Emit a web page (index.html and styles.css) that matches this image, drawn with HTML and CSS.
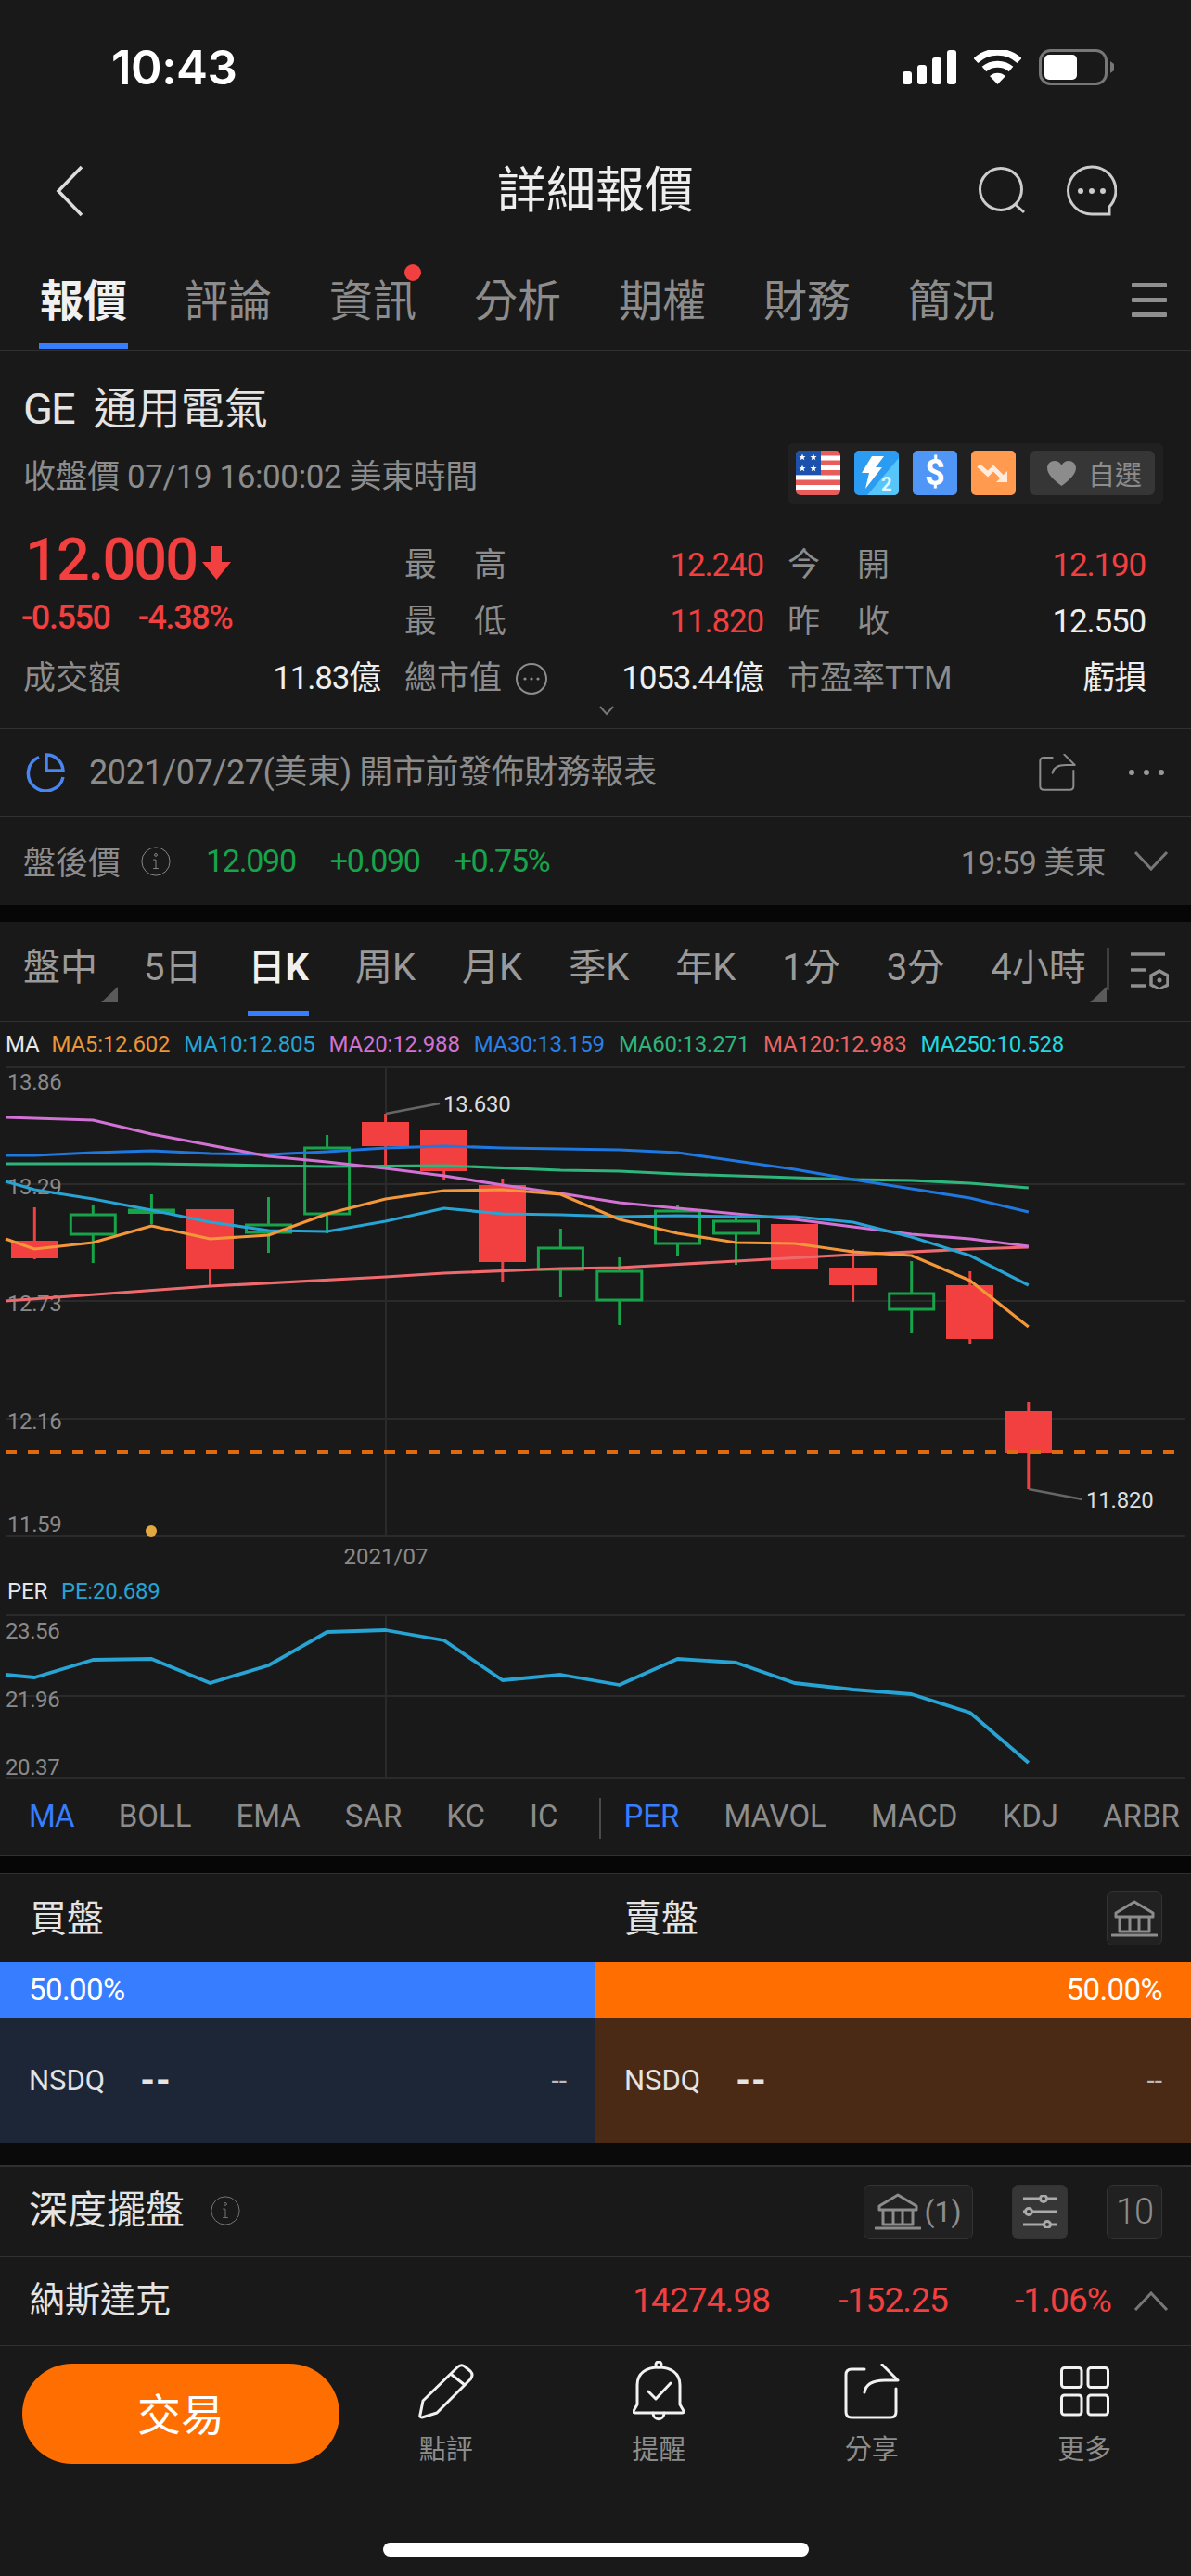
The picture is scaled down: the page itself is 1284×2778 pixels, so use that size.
FILE: index.html
```html
<!DOCTYPE html>
<html lang="zh-Hant">
<head>
  <meta charset="UTF-8" />
  <meta name="viewport" content="width=device-width, initial-scale=1.0"/>
  <title>詳細報價</title>
  <link rel="stylesheet" href="styles.css">
</head>
<body>
  <svg class="sprites">
    <symbol id="share" viewBox="0 0 60 60">
      <path d="M22 6H8Q2 6 2 12V52Q2 58 8 58H50Q56 58 56 52V27M41 1L58 18H44Q24 18 22 31" />
    </symbol>
    <symbol id="bank" viewBox="0 0 50 40">
      <path d="M5 14L25 2L45 14V18H5Z M1 38H49 M9 18V34H41V18 M20 18V34 M30 18V34" />
    </symbol>
    <symbol id="info" viewBox="0 0 36 36">
      <circle cx="18" cy="18" r="16" />
      <path d="M18 16V26 M15 26H21 M15 16H18" />
      <circle class="dot" cx="18" cy="10.5" r="1.5" />
    </symbol>
  </svg>

  <div class="status">
    <span class="clock">10:43</span>
    <div class="status-icons">
      <svg class="ico-signal" viewBox="0 0 58 37">
        <rect x="0" y="23" width="10" height="14" rx="3" />
        <rect x="16" y="16" width="10" height="21" rx="3" />
        <rect x="32" y="8" width="10" height="29" rx="3" />
        <rect x="48" y="0" width="10" height="37" rx="3" />
      </svg>
      <svg class="ico-wifi" viewBox="0 0 51 37">
        <path d="M2 11.5C15 -1 36 -1 49 11.5" />
        <path d="M11 20.5C19 13.5 32 13.5 40 20.5" />
        <path class="solid" d="M25.5 37L17 28C22 23.5 29 23.5 34 28Z" />
      </svg>
      <svg class="ico-batt" viewBox="0 0 82 39">
        <rect class="shell" x="1.5" y="1.5" width="71" height="36" rx="11" />
        <rect class="level" x="6" y="6" width="35" height="27" rx="5" />
        <path class="nub" d="M77 13L81 16V23L77 26Z" />
      </svg>
    </div>
  </div>

  <header class="nav">
    <svg class="ico-back" viewBox="0 0 30 56"><path d="M28 2L3 28L28 54" /></svg>
    <h1 class="nav-title">詳細報價</h1>
    <div class="nav-icons">
      <svg class="ico-search" viewBox="0 0 52 52">
        <circle cx="24" cy="24" r="22.5" />
        <path d="M39 40L49 49" />
      </svg>
      <svg class="ico-chat" viewBox="0 0 54 56">
        <path d="M27 2A25.5 25.5 0 1 0 27 53H46V45A25.5 25.5 0 0 0 27 2Z" />
        <circle class="dot" cx="15" cy="28" r="3" />
        <circle class="dot" cx="27" cy="28" r="3" />
        <circle class="dot" cx="39" cy="28" r="3" />
      </svg>
    </div>
  </header>

  <nav class="tabs">
    <a class="tab active">報價</a>
    <a class="tab">評論</a>
    <a class="tab has-dot">資訊</a>
    <a class="tab">分析</a>
    <a class="tab">期權</a>
    <a class="tab">財務</a>
    <a class="tab">簡況</a>
    <div class="tabs-menu"><span></span><span></span><span></span></div>
  </nav>

  <section class="quote">
    <div class="stock-name"><span class="ticker">GE</span><span>通用電氣</span></div>
    <div class="close-row">
      <span class="close-time">收盤價 07/19 16:00:02 美東時間</span>
      <div class="badges">
        <svg class="badge" viewBox="0 0 48 48">
          <rect width="48" height="48" fill="#e85c5c" />
          <rect y="5.5" width="48" height="5" fill="#fff" />
          <rect y="16" width="48" height="5" fill="#fff" />
          <rect y="26.5" width="48" height="5" fill="#fff" />
          <rect y="37" width="48" height="5" fill="#fff" />
          <rect width="27" height="26" fill="#1c52ad" />
          <path fill="#fff" d="M7 3.5L8 6H10.5L8.5 7.7L9.3 10.3L7 8.8L4.7 10.3L5.5 7.7L3.5 6H6Z" />
          <path fill="#fff" d="M19 3.5L20 6H22.5L20.5 7.7L21.3 10.3L19 8.8L16.7 10.3L17.5 7.7L15.5 6H18Z" />
          <path fill="#fff" d="M7 15.5L8 18H10.5L8.5 19.7L9.3 22.3L7 20.8L4.7 22.3L5.5 19.7L3.5 18H6Z" />
          <path fill="#fff" d="M19 15.5L20 18H22.5L20.5 19.7L21.3 22.3L19 20.8L16.7 22.3L17.5 19.7L15.5 18H18Z" />
        </svg>
        <svg class="badge" viewBox="0 0 48 48">
          <rect width="48" height="48" fill="#2c9cf2" />
          <path fill="#56c6fa" d="M48 8V48H14Z" />
          <path fill="#fff" d="M19 6H32L23 18H30L12 41L16 24H8Z" />
          <text class="badge-two" x="29" y="43">2</text>
        </svg>
        <svg class="badge" viewBox="0 0 48 48">
          <rect width="48" height="48" fill="#4f96f7" />
          <text class="badge-dollar" x="24" y="37">$</text>
        </svg>
        <svg class="badge" viewBox="0 0 48 48">
          <rect width="48" height="48" fill="#ff9a4e" />
          <path class="badge-trend" d="M8 16L18 25L24 19L34 29" />
          <path fill="#ffeadb" d="M39 22V34H27Z" />
        </svg>
        <div class="fav">
          <svg class="ico-heart" viewBox="0 0 34 30"><path d="M17 29C8 22 1 16 1 9C1 4 5 1 9 1C12.5 1 15.5 3 17 6C18.5 3 21.5 1 25 1C29 1 33 4 33 9C33 16 26 22 17 29Z" /></svg>
          <span>自選</span>
        </div>
      </div>
    </div>

    <div class="stats">
      <div class="price-box">
        <div class="price">12.000<svg class="ico-down" viewBox="0 0 31 36"><path d="M10 0H21V17H31L15.5 36L0 17H10Z" /></svg></div>
        <div class="change"><span>-0.550</span><span>-4.38%</span></div>
      </div>
      <div class="stat"><span class="lbl spread"><i>最</i><i>高</i></span><span class="val dn">12.240</span></div>
      <div class="stat"><span class="lbl spread"><i>今</i><i>開</i></span><span class="val dn">12.190</span></div>
      <div class="stat"><span class="lbl spread"><i>最</i><i>低</i></span><span class="val dn">11.820</span></div>
      <div class="stat"><span class="lbl spread"><i>昨</i><i>收</i></span><span class="val">12.550</span></div>
      <div class="stat"><span class="lbl">成交額</span><span class="val">11.83億</span></div>
      <div class="stat">
        <span class="lbl with-icon">總市值
          <svg class="ico-more" viewBox="0 0 36 36">
            <circle cx="18" cy="18" r="16" />
            <circle class="dot" cx="11" cy="18" r="1.6" />
            <circle class="dot" cx="18" cy="18" r="1.6" />
            <circle class="dot" cx="25" cy="18" r="1.6" />
          </svg>
        </span>
        <span class="val">1053.44億</span>
      </div>
      <div class="stat"><span class="lbl">市盈率TTM</span><span class="val">虧損</span></div>
    </div>
    <svg class="ico-expand" viewBox="0 0 18 12"><path d="M2 2L9 10L16 2" /></svg>
  </section>

  <section class="info-row">
    <svg class="ico-pie" viewBox="0 0 42 42">
      <path d="M14 4.5A19 19 0 1 0 40 26" />
      <path d="M22 2V19H40A18 18 0 0 0 22 2Z" />
    </svg>
    <span class="info-text">2021/07/27(美東) 開市前發佈財務報表</span>
    <svg class="ico-share-sm"><use href="#share" /></svg>
    <div class="dots"><span></span><span></span><span></span></div>
  </section>

  <section class="info-row after">
    <span class="after-lbl">盤後價</span>
    <svg class="ico-info after-i"><use href="#info" /></svg>
    <span class="up after-num">12.090</span>
    <span class="up after-num">+0.090</span>
    <span class="up after-num">+0.75%</span>
    <span class="after-time">19:59 美東</span>
    <svg class="ico-chevron" viewBox="0 0 38 22"><path d="M2 2L19 20L36 2" /></svg>
  </section>

  <div class="band"></div>

  <section class="chart">
    <div class="period-bar">
      <a class="period corner">盤中</a>
      <a class="period">5日</a>
      <a class="period active">日<b>K</b></a>
      <a class="period">周K</a>
      <a class="period">月K</a>
      <a class="period">季K</a>
      <a class="period">年K</a>
      <a class="period">1分</a>
      <a class="period">3分</a>
      <a class="period corner">4小時</a>
      <span class="period-sep"></span>
      <svg class="ico-settings" viewBox="0 0 42 40">
        <path d="M1 2H38 M1 19H18 M1 36H18" />
        <path d="M32 20L41 25V35L32 40L23 35V25Z" />
        <circle cx="32" cy="30" r="2.5" />
      </svg>
    </div>

    <div class="legend">
      <span class="lg-head">MA</span>
      <span class="c-ma5">MA5:12.602</span>
      <span class="c-ma10">MA10:12.805</span>
      <span class="c-ma20">MA20:12.988</span>
      <span class="c-ma30">MA30:13.159</span>
      <span class="c-ma60">MA60:13.271</span>
      <span class="c-ma120">MA120:12.983</span>
      <span class="c-ma250">MA250:10.528</span>
    </div>

    <!-- page coordinates kept in the viewBox so the numbers read off the screen -->
    <svg class="kline" viewBox="0 1150 1284 548">
      <path class="grid" d="M6 1151H1277 M6 1277H1277 M6 1403H1277 M6 1530H1277 M6 1656H1277 M416 1151V1656" />
      <text class="axis" x="8" y="1175">13.86</text>
      <text class="axis" x="8" y="1288">13.29</text>
      <text class="axis" x="8" y="1414">12.73</text>
      <text class="axis" x="8" y="1541">12.16</text>
      <text class="axis" x="8" y="1652">11.59</text>
      <text class="axis mid" x="416" y="1687">2021/07</text>

      <g class="cd-up">
        <path d="M100.3 1299V1310M100.3 1331V1362" /><rect x="76.3" y="1310" width="48" height="21" />
        <path d="M163.4 1288V1305M163.4 1308V1320" /><rect x="139.4" y="1305" width="48" height="2.5" />
        <path d="M289.5 1291V1321M289.5 1329V1351" /><rect x="265.5" y="1321" width="48" height="8" />
        <path d="M352.6 1224V1238M352.6 1309V1330" /><rect x="328.6" y="1238" width="48" height="71" />
        <path d="M604.4 1325V1346M604.4 1369V1399" /><rect x="580.4" y="1346" width="48" height="23" />
        <path d="M667.8 1356V1371M667.8 1402V1429" /><rect x="643.8" y="1371" width="48" height="31" />
        <path d="M730.5 1299V1306M730.5 1341V1355" /><rect x="706.5" y="1306" width="48" height="35" />
        <path d="M793.5 1313V1317M793.5 1330V1364" /><rect x="769.5" y="1317" width="48" height="13" />
        <path d="M982.7 1360V1395M982.7 1412V1438" /><rect x="958.7" y="1395" width="48" height="17" />
      </g>
      <g class="cd-dn">
        <path d="M37.3 1302V1358" /><rect x="12" y="1338" width="51" height="19" />
        <path d="M226.5 1304V1387" /><rect x="201" y="1304" width="51" height="64" />
        <path d="M415.6 1201V1257" /><rect x="390" y="1210" width="51" height="26" />
        <path d="M478.7 1219V1272" /><rect x="453" y="1219" width="51" height="44" />
        <path d="M541.8 1271V1382" /><rect x="516" y="1278" width="51" height="83" />
        <path d="M856.6 1320V1369" /><rect x="831" y="1320" width="51" height="48" />
        <path d="M919.6 1347V1404" /><rect x="894" y="1367" width="51" height="19" />
        <path d="M1045.8 1371V1449" /><rect x="1020" y="1386" width="51" height="58" />
        <path d="M1108.8 1512V1606" /><rect x="1083" y="1522" width="51" height="45" />
      </g>

      <polyline class="ln ln-ma120" points="6,1403 226.5,1387 415.6,1377 478.7,1373 604.4,1368 667.8,1367 793.5,1360 919.6,1353 1045.8,1347 1108.8,1345" />
      <polyline class="ln ln-ma60" points="6,1255 163.4,1255 289.5,1257 352.6,1258 478.7,1257 604.4,1262 667.8,1263 730.5,1266 793.5,1268 856.6,1270 919.6,1272 982.7,1273 1045.8,1276 1108.8,1281" />
      <polyline class="ln ln-ma30" points="6,1246 37.3,1246 100.3,1243 163.4,1241 226.5,1244 289.5,1245 352.6,1242 415.6,1238 478.7,1236 541.8,1238 604.4,1239 667.8,1240 730.5,1243 793.5,1252 856.6,1261 919.6,1272 982.7,1282 1045.8,1292 1108.8,1307" />
      <polyline class="ln ln-ma20" points="6,1205 37.3,1206 100.3,1208 163.4,1223 226.5,1235 289.5,1247 352.6,1253 415.6,1260 478.7,1268 541.8,1278 604.4,1287 667.8,1297 730.5,1303 793.5,1309 856.6,1315 919.6,1323 982.7,1331 1045.8,1336 1108.8,1344" />
      <polyline class="ln ln-ma10" points="6,1274 37.3,1283 100.3,1293 163.4,1305 226.5,1318 289.5,1327 352.6,1328 415.6,1317 478.7,1303 541.8,1309 604.4,1310 667.8,1312 730.5,1311 793.5,1312 856.6,1312 919.6,1318 982.7,1334 1045.8,1354 1108.8,1386" />
      <polyline class="ln ln-ma5" points="6,1336 37.3,1347 100.3,1340 163.4,1322 226.5,1336 289.5,1332 352.6,1309 415.6,1293 478.7,1284 541.8,1283 604.4,1288 667.8,1315 730.5,1330 793.5,1340 856.6,1341 919.6,1350 982.7,1354 1045.8,1381 1108.8,1431" />

      <path class="dash" d="M6 1566H1266" />
      <path class="leader" d="M416 1201L474 1190 M1109 1606L1167 1617" />
      <text class="tag" x="478" y="1199">13.630</text>
      <text class="tag" x="1171" y="1626">11.820</text>
      <circle class="marker" cx="163" cy="1651" r="6" />
    </svg>

    <div class="legend per-legend">
      <span class="lg-head">PER</span>
      <span class="c-ma10">PE:20.689</span>
    </div>

    <svg class="perline" viewBox="0 1741 1284 184">
      <path class="grid" d="M6 1742H1277 M6 1829H1277 M6 1917H1277 M416 1742V1917" />
      <text class="axis" x="6" y="1767">23.56</text>
      <text class="axis" x="6" y="1841">21.96</text>
      <text class="axis" x="6" y="1914">20.37</text>
      <polyline class="ln ln-ma10 ln-pe" points="6,1806 37.3,1809 100.3,1790 163.4,1789 226.5,1815 289.5,1796 352.6,1760 415.6,1758 478.7,1769 541.8,1812 604.4,1806 667.8,1817 730.5,1789 793.5,1793 856.6,1815 919.6,1822 982.7,1827 1045.8,1847 1108.8,1901" />
    </svg>

    <div class="indicators">
      <a class="ind on ind-first">MA</a>
      <a class="ind">BOLL</a>
      <a class="ind">EMA</a>
      <a class="ind">SAR</a>
      <a class="ind">KC</a>
      <a class="ind">IC</a>
      <span class="ind-sep"></span>
      <a class="ind on">PER</a>
      <a class="ind">MAVOL</a>
      <a class="ind">MACD</a>
      <a class="ind">KDJ</a>
      <a class="ind">ARBR</a>
    </div>
  </section>

  <div class="band band-ruled"></div>

  <section class="book">
    <div class="book-head">
      <span class="book-title">買盤</span>
      <span class="book-title">賣盤</span>
      <div class="square-btn"><svg class="ico-bank"><use href="#bank" /></svg></div>
    </div>
    <div class="book-bars">
      <div class="bar bar-buy">50.00%</div>
      <div class="bar bar-sell">50.00%</div>
    </div>
    <div class="book-rows">
      <div class="book-row row-buy"><span>NSDQ</span><b>--</b><em>--</em></div>
      <div class="book-row row-sell"><span>NSDQ</span><b>--</b><em>--</em></div>
    </div>
  </section>

  <div class="band band-ruled band-low"></div>

  <section class="depth-head">
    <span class="depth-title">深度擺盤</span>
    <svg class="ico-info depth-i"><use href="#info" /></svg>
    <div class="depth-tools">
      <div class="square-btn wide"><svg class="ico-bank"><use href="#bank" /></svg><span>(1)</span></div>
      <div class="square-btn filled">
        <svg class="ico-sliders" viewBox="0 0 36 36">
          <path d="M0 4H36 M0 18H36 M0 32H36" />
          <circle cx="22" cy="4" r="3.5" />
          <circle cx="6" cy="18" r="3.5" />
          <circle cx="26" cy="32" r="3.5" />
        </svg>
      </div>
      <div class="square-btn ten"><span>10</span></div>
    </div>
  </section>

  <section class="index-row">
    <span class="index-name">納斯達克</span>
    <span class="index-num n1">14274.98</span>
    <span class="index-num n2">-152.25</span>
    <span class="index-num n3">-1.06%</span>
    <svg class="ico-chevron" viewBox="0 0 38 22"><path d="M2 20L19 2L36 20" /></svg>
  </section>

  <footer class="bottom">
    <div class="bottom-bar">
      <button class="trade"><span>交易</span></button>
      <div class="actions">
        <div class="action">
          <svg class="ico-act" viewBox="0 0 60 60">
            <path d="M5 40L42 4Q46 0 50 3L56 8Q60 12 56 17L20 53L4 58Q1 58 2 55Z M36 12L50 23" />
          </svg>
          <span>點評</span>
        </div>
        <div class="action">
          <svg class="ico-act ico-bell" viewBox="0 0 56 66">
            <circle cx="28" cy="4" r="3" />
            <path d="M5 47V26C5 13 15 7 28 7C41 7 51 13 51 26V47L55 54Q56 56 53 56H3Q0 56 1 54Z" />
            <path d="M22 56C22 65 34 65 34 56" />
            <path d="M17 33L25 41L41 24" />
          </svg>
          <span>提醒</span>
        </div>
        <div class="action">
          <svg class="ico-act"><use href="#share" /></svg>
          <span>分享</span>
        </div>
        <div class="action">
          <svg class="ico-act ico-apps" viewBox="0 0 53 54">
            <rect x="1.5" y="1.5" width="21.5" height="21" rx="3" />
            <rect x="30" y="1.5" width="21.5" height="21" rx="3" />
            <rect x="1.5" y="31" width="21.5" height="21" rx="3" />
            <rect x="30" y="31" width="21.5" height="21" rx="3" />
          </svg>
          <span>更多</span>
        </div>
      </div>
    </div>
    <div class="home-bar"></div>
  </footer>
</body>
</html>
```

FILE: styles.css
```css
:root {
  --bg: #191919;
  --band: #060606;
  --line: #303030;
  --text: #e4e4e4;
  --muted: #8c8c8c;
  --red: #f23f3f;
  --green: #17a34a;
  --blue: #377dff;
  --orange: #ff6e00;
}

* {
  box-sizing: border-box;
}

body {
  margin: 0;
  width: 1284px;
  height: 2778px;
  overflow: hidden;
  background-color: var(--bg);
  color: var(--text);
  font-family: Roboto, "Noto Sans CJK TC", sans-serif;
}

i, em {
  font-style: normal;
}

svg {
  display: block;
  flex: none;
}

.sprites {
  display: none;
}

/* shared stroke look for the symbols */
#share path, #bank path {
  fill: none;
  stroke-width: 3;
  stroke-linejoin: round;
  stroke-linecap: round;
}

/* status bar */
.status {
  height: 144px;
  padding: 0 82px 0 120px;
  display: flex;
  align-items: center;
  justify-content: space-between;
}

.clock {
  font-family: Inter, sans-serif;
  font-size: 51px;
  font-weight: 600;
  letter-spacing: -0.5px;
  color: #fff;
}

.status-icons {
  display: flex;
  align-items: center;
  gap: 19px;
}

.ico-signal {
  width: 58px;
  height: 37px;
  fill: #fff;
}

.ico-wifi {
  width: 51px;
  height: 37px;
  fill: none;
  stroke: #fff;
  stroke-width: 7;
}

.ico-wifi .solid {
  fill: #fff;
  stroke: none;
}

.ico-batt {
  width: 82px;
  height: 39px;
}

.ico-batt .shell {
  fill: none;
  stroke: #777;
  stroke-width: 3;
}

.ico-batt .level {
  fill: #fff;
}

.ico-batt .nub {
  fill: #777;
}

/* nav */
.nav {
  height: 124px;
  padding: 0 80px 0 60px;
  display: flex;
  align-items: center;
  justify-content: space-between;
  position: relative;
}

.nav-title {
  position: absolute;
  left: 0;
  right: 0;
  margin: 0;
  text-align: center;
  font-size: 53px;
  font-weight: 400;
  line-height: 60px;
  color: #eee;
}

.ico-back {
  width: 30px;
  height: 56px;
  fill: none;
  stroke: #ddd;
  stroke-width: 3.5;
}

.nav-icons {
  display: flex;
  align-items: center;
  gap: 43px;
}

.ico-search, .ico-chat {
  fill: none;
  stroke: #ccc;
  stroke-width: 3;
}

.ico-search {
  width: 52px;
  height: 52px;
}

.ico-chat {
  width: 54px;
  height: 56px;
}

.ico-chat .dot {
  fill: #ccc;
  stroke: none;
}

/* top tabs */
.tabs {
  height: 110px;
  padding-left: 42px;
  display: flex;
  gap: 60px;
  border-bottom: 1px solid var(--line);
  position: relative;
}

.tab {
  width: 96px;
  height: 108px;
  padding-top: 31px;
  text-align: center;
  font-size: 47px;
  line-height: 52px;
  color: var(--muted);
  border-bottom: 6px solid transparent;
  position: relative;
}

.tab.active {
  color: #f0f0f0;
  font-weight: 700;
  border-bottom-color: var(--blue);
}

.has-dot::after {
  content: "";
  position: absolute;
  top: 17px;
  right: -4px;
  width: 18px;
  height: 18px;
  border-radius: 50%;
  background-color: var(--red);
}

.tabs-menu {
  margin-left: auto;
  margin-right: 26px;
  padding-top: 37px;
  width: 38px;
  display: flex;
  flex-direction: column;
  gap: 11px;
}

.tabs-menu span {
  display: block;
  height: 5px;
  border-radius: 1px;
  background-color: #8f8f8f;
}

/* quote block */
.quote {
  height: 407px;
  padding: 0 49px 0 25px;
  position: relative;
}

.stock-name {
  height: 100px;
  padding-top: 36px;
  display: flex;
  gap: 21px;
  font-size: 47px;
  line-height: 54px;
  color: var(--text);
}

.ticker {
  letter-spacing: -2px;
}

.close-row {
  height: 64px;
  margin-right: -19px;
  display: flex;
  align-items: center;
  justify-content: space-between;
}

.close-time {
  font-size: 35px;
  letter-spacing: -0.4px;
  color: var(--muted);
}

.badges {
  height: 65px;
  padding: 0 9px;
  display: flex;
  align-items: center;
  gap: 15px;
  background-color: #202020;
  border-radius: 6px;
}

.badge {
  width: 48px;
  height: 48px;
  border-radius: 5px;
}

.badge-two {
  font-size: 20px;
  font-weight: 700;
  fill: #e6f8ff;
}

.badge-dollar {
  font-size: 38px;
  font-weight: 700;
  fill: #fff;
  text-anchor: middle;
}

.badge-trend {
  fill: none;
  stroke: #ffeadb;
  stroke-width: 5;
}

.fav {
  width: 135px;
  height: 48px;
  padding-left: 18px;
  display: flex;
  align-items: center;
  gap: 12px;
  background-color: #363636;
  border-radius: 6px;
  color: var(--muted);
  font-size: 29px;
}

.ico-heart {
  width: 33px;
  height: 29px;
  fill: var(--muted);
}

.stats {
  margin-top: 37px;
  display: grid;
  grid-template-columns: 385px 387px 386px;
  grid-auto-rows: 61px;
  column-gap: 26px;
  font-size: 35px;
}

.price-box {
  grid-row: span 2;
  color: var(--red);
}

.price {
  height: 56px;
  margin-top: -3px;
  margin-left: 2px;
  display: flex;
  align-items: center;
  gap: 6px;
  font-size: 63px;
  font-weight: 500;
  letter-spacing: -1.9px;
  line-height: 56px;
}

.ico-down {
  width: 31px;
  height: 36px;
  fill: var(--red);
  margin-top: 6px;
}

.change {
  margin-top: 14px;
  display: flex;
  gap: 30px;
  margin-left: -2px;
  font-size: 36px;
  font-weight: 500;
  letter-spacing: -1.4px;
  line-height: 40px;
}

.stat {
  display: flex;
  align-items: center;
  justify-content: space-between;
  line-height: 40px;
}

.lbl {
  color: var(--muted);
}

.spread {
  width: 110px;
  display: flex;
  justify-content: space-between;
}

.with-icon {
  display: flex;
  align-items: center;
  gap: 14px;
}

.val {
  letter-spacing: -1.2px;
  color: #eee;
}

.val.dn {
  color: var(--red);
}

.ico-more {
  width: 36px;
  height: 36px;
  fill: none;
  stroke: var(--muted);
  stroke-width: 2;
}

.ico-more .dot {
  fill: var(--muted);
  stroke: none;
}

.ico-expand {
  width: 18px;
  height: 12px;
  margin: -2px 0 0 620px;
  fill: none;
  stroke: #777;
  stroke-width: 2;
}

/* info rows */
.info-row {
  height: 95px;
  padding: 0 29px 0 28px;
  border-top: 1px solid var(--line);
  display: flex;
  align-items: center;
  font-size: 35px;
  color: var(--muted);
}

.ico-pie {
  width: 42px;
  height: 42px;
  fill: none;
  stroke: #4a86f0;
  stroke-width: 3.5;
}

.info-text {
  margin: -9px 0 0 26px;
  font-size: 36px;
  letter-spacing: -0.4px;
}

.ico-share-sm {
  width: 40px;
  height: 40px;
  margin-left: auto;
  fill: none;
  stroke: #8c8c8c;
}

.dots {
  margin-left: 57px;
  display: flex;
  gap: 10px;
}

.dots span {
  width: 6px;
  height: 6px;
  border-radius: 50%;
  background-color: #999;
}

.after {
  height: 96px;
  padding: 0 24px 2px 25px;
}

.ico-info {
  width: 34px;
  height: 34px;
  fill: none;
  stroke: #8c8c8c;
}

.after-i {
  margin: 2px 37px 0 21px;
}

.up {
  color: var(--green);
}

.after-num {
  margin-right: 37px;
  letter-spacing: -1.3px;
  font-size: 34px;
}

.after-time {
  margin-left: auto;
  margin-right: 30px;
  font-size: 34px;
  letter-spacing: -0.6px;
}

.ico-chevron {
  width: 38px;
  height: 22px;
  fill: none;
  stroke: #777;
  stroke-width: 3;
}

.band {
  height: 18px;
  background-color: var(--band);
}

.band-ruled {
  height: 20px;
  border-top: 1px solid var(--line);
  border-bottom: 1px solid var(--line);
}

.band-low {
  height: 25px;
  border-top: none;
  background-color: #0a0a0a;
}

/* chart */
.period-bar {
  height: 108px;
  padding: 0 24px 0 25px;
  display: flex;
  gap: 50px;
  border-bottom: 1px solid var(--line);
  font-size: 40px;
  color: #9a9a9a;
  position: relative;
}

.period {
  height: 102px;
  padding-top: 25px;
  line-height: 50px;
  white-space: nowrap;
  position: relative;
}

.period.active {
  color: #f0f0f0;
  font-weight: 500;
  border-bottom: 6px solid var(--blue);
}

.corner::after {
  content: "";
  position: absolute;
  right: -22px;
  top: 70px;
  border-left: 18px solid transparent;
  border-bottom: 17px solid #5a5a5a;
}

.period-sep {
  position: absolute;
  left: 1193px;
  top: 28px;
  width: 3px;
  height: 46px;
  background-color: #3e3e3e;
}

.ico-settings {
  position: absolute;
  left: 1218px;
  top: 33px;
  width: 42px;
  height: 40px;
  fill: none;
  stroke: #8f8f8f;
  stroke-width: 3.5;
}

.ico-settings circle {
  fill: #8f8f8f;
  stroke: none;
}

.legend {
  height: 48px;
  padding-left: 6px;
  display: flex;
  align-items: center;
  gap: 15px;
  font-size: 24px;
  letter-spacing: -0.2px;
}

.lg-head {
  margin-right: -2px;
  color: #e8e8e8;
}

.c-ma5 { color: #e8963a; }
.c-ma10 { color: #27a3d4; }
.c-ma20 { color: #d272d4; }
.c-ma30 { color: #2a80e6; }
.c-ma60 { color: #2fb57c; }
.c-ma120 { color: #e86464; }
.c-ma250 { color: #22d8e0; }

.kline {
  width: 1284px;
  height: 548px;
}

.perline {
  width: 1284px;
  height: 184px;
}

.per-legend {
  height: 43px;
  padding: 0 0 8px 8px;
}

.per-legend .lg-head {
  margin-right: 0;
}

.grid {
  fill: none;
  stroke: #2a2a2a;
  stroke-width: 2;
}

.axis {
  font-size: 24px;
  letter-spacing: -0.4px;
  fill: #8a8a8a;
}

.mid {
  text-anchor: middle;
  letter-spacing: 0;
}

.tag {
  font-size: 24px;
  letter-spacing: -0.2px;
  fill: #ddd;
}

.cd-up rect, .cd-up path {
  fill: none;
  stroke: #17a34a;
  stroke-width: 3;
}

.cd-dn rect {
  fill: var(--red);
}

.cd-dn path {
  stroke: var(--red);
  stroke-width: 3;
}

.ln {
  fill: none;
  stroke-width: 3.2;
  stroke-linejoin: round;
}

.ln-ma5 { stroke: #f2973a; }
.ln-ma10 { stroke: #27a3d4; }
.ln-ma20 { stroke: #d272d4; }
.ln-ma30 { stroke: #1f78e0; }
.ln-ma60 { stroke: #2fb57c; }
.ln-ma120 { stroke: #ef6a6e; }

.ln-pe {
  stroke-width: 3.8;
}

.dash {
  stroke: #e0680f;
  stroke-width: 4;
  stroke-dasharray: 12 12;
}

.leader {
  fill: none;
  stroke: #666;
  stroke-width: 2.5;
}

.marker {
  fill: #e2a93f;
}

.indicators {
  height: 76px;
  padding: 13px 0 0 31px;
  display: flex;
  gap: 48px;
  font-size: 33px;
  line-height: 42px;
  color: #8c8c8c;
  white-space: nowrap;
}

.ind.on {
  color: var(--blue);
}

.ind-first {
  letter-spacing: -1px;
}

.ind-sep {
  flex: none;
  width: 2px;
  height: 44px;
  margin: 1px -24px 0 -3px;
  background-color: #4a4a4a;
}

/* buy / sell */
.book-head {
  height: 95px;
  padding: 0 31px 0 32px;
  display: flex;
  align-items: center;
}

.book-title {
  margin-top: -5px;
  font-size: 40px;
  color: var(--text);
}

.book-title:first-child {
  width: 641px;
}

.square-btn {
  width: 60px;
  height: 59px;
  margin-left: auto;
  display: flex;
  align-items: center;
  justify-content: center;
  background-color: #212121;
  border: 1px solid #333;
  border-radius: 7px;
  font-size: 32px;
  color: var(--muted);
}

.square-btn.wide {
  width: 118px;
  gap: 3px;
}

.square-btn.filled {
  background-color: #363636;
}

.square-btn.ten {
  font-size: 38px;
  font-weight: 300;
  letter-spacing: -1px;
}

.ico-bank {
  width: 50px;
  height: 40px;
  fill: none;
  stroke: #8c8c8c;
}

.book-bars, .book-rows {
  display: grid;
  grid-template-columns: 642px 642px;
}

.bar {
  height: 60px;
  padding: 0 31px;
  font-size: 33px;
  line-height: 60px;
  letter-spacing: -0.6px;
  color: #fff;
}

.bar-buy {
  background-color: var(--blue);
}

.bar-sell {
  background-color: var(--orange);
  text-align: right;
}

.book-row {
  height: 135px;
  padding: 0 31px;
  display: flex;
  align-items: center;
  gap: 38px;
  font-size: 31px;
}

.book-row b {
  font-size: 40px;
  letter-spacing: 1px;
}

.book-row em {
  margin-left: auto;
  font-size: 30px;
  color: #bbb;
}

.row-buy {
  background-color: #1c2636;
}

.row-sell {
  background-color: #4a2a14;
}

/* depth */
.depth-head {
  height: 98px;
  padding: 0 31px;
  display: flex;
  align-items: center;
  border-top: 1px solid var(--line);
  border-bottom: 1px solid var(--line);
}

.depth-title {
  margin-top: -11px;
  font-size: 42px;
  color: var(--text);
}

.depth-i {
  margin: -2px 0 0 27px;
  stroke: #777;
}

.depth-tools {
  margin-left: auto;
  display: flex;
  gap: 42px;
}

.ico-sliders {
  width: 36px;
  height: 36px;
  fill: #363636;
  stroke: #aaa;
  stroke-width: 3;
}

.index-row {
  height: 96px;
  padding: 0 24px 0 32px;
  display: flex;
  align-items: center;
  border-bottom: 1px solid var(--line);
}

.index-name {
  margin-top: -11px;
  font-size: 38px;
  color: var(--text);
}

.index-num {
  margin-top: -2px;
  font-size: 37px;
  letter-spacing: -0.9px;
  color: var(--red);
}

.n1 {
  margin-left: auto;
}

.n2 {
  margin-left: 74px;
}

.n3 {
  margin-left: 72px;
  margin-right: 24px;
}

/* bottom */
.bottom-bar {
  padding: 19px 0 0 24px;
  display: flex;
}

.trade {
  width: 342px;
  height: 108px;
  padding: 0 0 6px;
  border: none;
  border-radius: 54px;
  background-color: var(--orange);
  color: #fff;
  font-family: inherit;
  font-size: 47px;
}

.actions {
  flex: 1;
  display: grid;
  grid-template-columns: repeat(4, 1fr);
}

.action {
  display: flex;
  flex-direction: column;
  align-items: center;
  font-size: 29px;
  line-height: 36px;
  color: var(--muted);
}

.ico-act {
  width: 60px;
  height: 60px;
  margin-bottom: 15px;
  fill: none;
  stroke: #f2f2f2;
  stroke-width: 3;
  stroke-linejoin: round;
  stroke-linecap: round;
}

.ico-bell {
  width: 56px;
  height: 66px;
  margin: -3px 0 12px;
}

.ico-apps {
  width: 53px;
  height: 54px;
  margin: 3px 0 18px;
}

.home-bar {
  width: 459px;
  height: 15px;
  margin: 82px 0 0 413px;
  border-radius: 8px;
  background-color: #fff;
}
```
